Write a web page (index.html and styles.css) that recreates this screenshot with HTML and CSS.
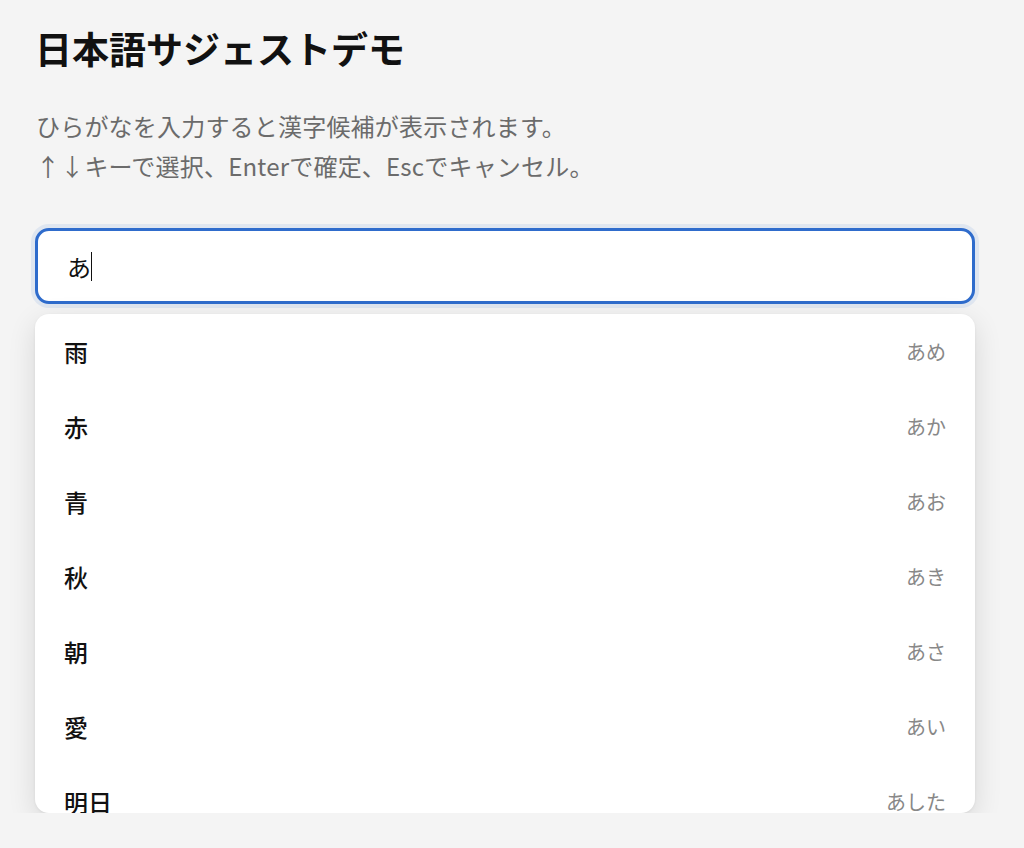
FILE: index.html
```html
<!DOCTYPE html>
<html lang="ja">
<head>
<meta charset="utf-8">
<title>日本語サジェストデモ</title>
<link rel="stylesheet" href="styles.css">
</head>
<body>
<main class="page">
  <h1 class="title">日本語サジェストデモ</h1>
  <p class="desc">ひらがなを入力すると漢字候補が表示されます。<br>↑↓キーで選択、Enterで確定、Escでキャンセル。</p>
  <div class="field">
    <div class="input"><span class="value">あ</span><span class="caret"></span></div>
    <ul class="list">
      <li class="item"><span class="kanji">雨</span><span class="yomi">あめ</span></li>
      <li class="item"><span class="kanji">赤</span><span class="yomi">あか</span></li>
      <li class="item"><span class="kanji">青</span><span class="yomi">あお</span></li>
      <li class="item"><span class="kanji">秋</span><span class="yomi">あき</span></li>
      <li class="item"><span class="kanji">朝</span><span class="yomi">あさ</span></li>
      <li class="item"><span class="kanji">愛</span><span class="yomi">あい</span></li>
      <li class="item"><span class="kanji">明日</span><span class="yomi">あした</span></li>
    </ul>
  </div>
</main>
</body>
</html>
```
FILE: styles.css
```css
html, body {
  margin: 0;
  padding: 0;
  background: #f4f4f4;
}
body {
  font-family: "Noto Sans CJK JP", "Noto Sans", sans-serif;
  color: #111;
}
.page {
  width: 940px;
  padding: 22px 0 0 35px;
}
.title {
  margin: 0;
  font-size: 37px;
  line-height: 52px;
  font-weight: 700;
}
.desc {
  margin: 32px 0 0 1px;
  font-size: 24px;
  line-height: 40px;
  color: #6b6b6b;
  letter-spacing: 0.2px;
}
.field {
  margin-top: 42px;
}
.input {
  box-sizing: border-box;
  height: 76px;
  background: #fff;
  border: 3px solid #2f6ccc;
  border-radius: 14px;
  box-shadow: 0 0 0 4px #dfe6f0;
  display: flex;
  align-items: center;
  padding-left: 29px;
  font-size: 24px;
  color: #111;
}
.caret {
  display: inline-block;
  width: 1px;
  height: 29px;
  background: #111;
}
.list {
  list-style: none;
  margin: 10px 0 0;
  padding: 0;
  height: 499px;
  overflow: hidden;
  background: #fff;
  border-radius: 14px;
  box-shadow: 0 8px 28px rgba(0, 0, 0, 0.12), 0 1px 3px rgba(0, 0, 0, 0.06);
}
.item {
  height: 75px;
  display: flex;
  align-items: center;
  justify-content: space-between;
  padding: 0 29px;
}
.kanji {
  font-size: 24px;
  font-weight: 500;
  color: #111;
}
.yomi {
  font-size: 20px;
  color: #888;
}
```
